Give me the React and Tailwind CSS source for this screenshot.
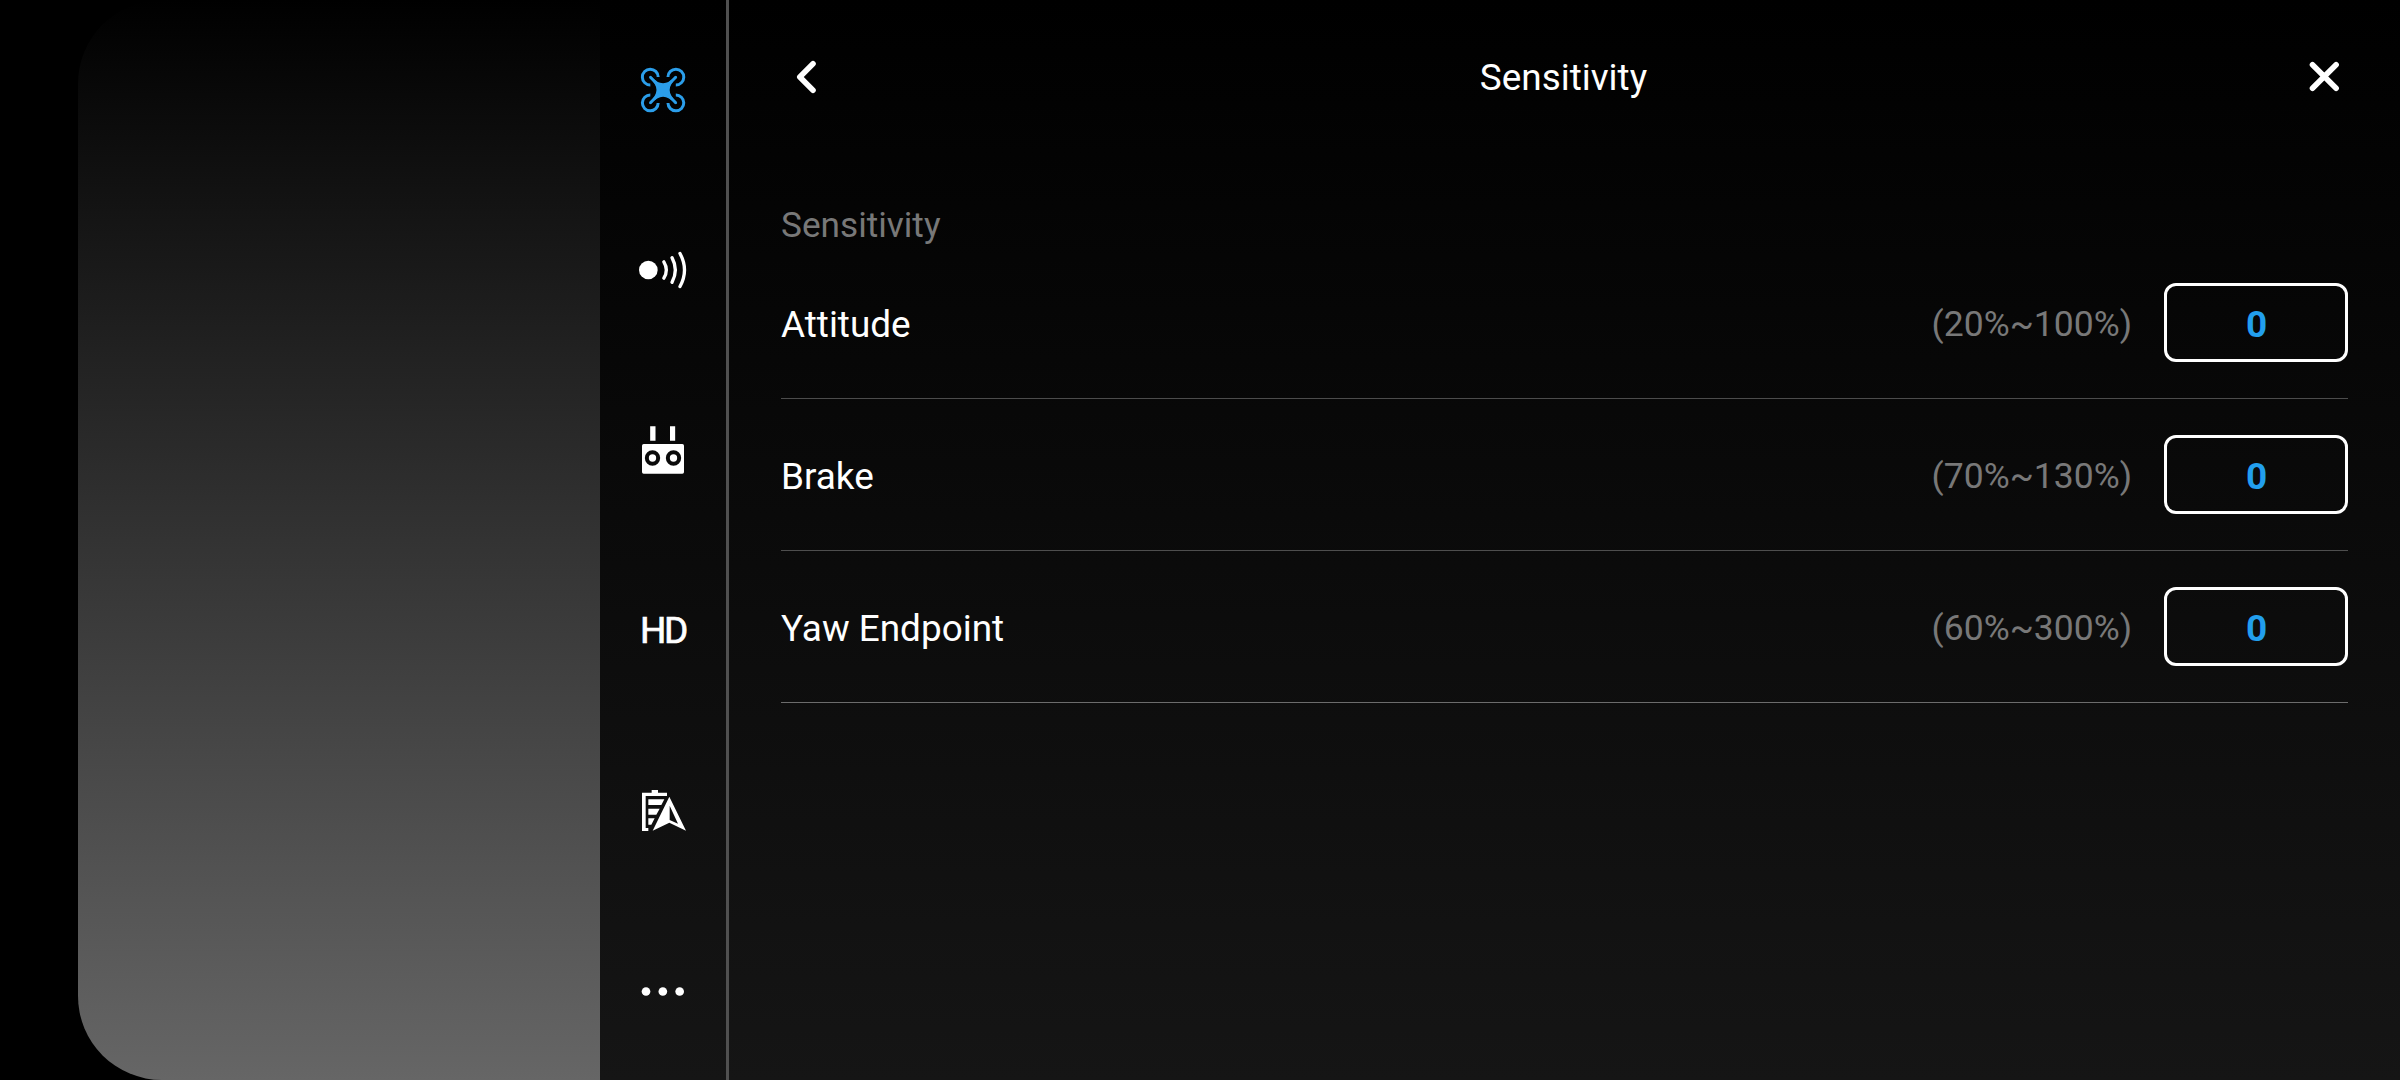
const rows = [
  { label: "Attitude", range: "(20%~100%)", line: "border-[#4c4c4c]" },
  { label: "Brake", range: "(70%~130%)", line: "border-[#4e4e4e]" },
  { label: "Yaw Endpoint", range: "(60%~300%)", line: "border-[#6c6c6c]" },
];

function Glyph({ children }) {
  return (
    <svg className="size-[54px]" viewBox="138 69 162 162" fill="none">
      {children}
    </svg>
  );
}

// One arm per corner, mirrored from the top-left one.
const corners = [
  "translate(0 0)",
  "translate(438.4 0) scale(-1 1)",
  "translate(0 300) scale(1 -1)",
  "translate(438.4 300) scale(-1 -1)",
];

function DroneIcon() {
  return (
    <Glyph>
      {corners.map((t) => (
        <g key={t} transform={t} stroke="#2b9eea">
          <path d="M204.500 111A23.700 23.700 0 1 0 181 135" strokeWidth="9" />
          <path d="M181 111.500L204 135" strokeWidth="8" strokeLinecap="round" />
        </g>
      ))}
      <path
        d="M184 109Q219.200 151 254.400 109L260 115Q218 150 260 185L254.400 191Q219.200 149 184 191L178.400 185Q220.400 150 178.400 115Z"
        fill="#2b9eea"
      />
    </Glyph>
  );
}

function SignalIcon() {
  return (
    <Glyph>
      <circle cx="175" cy="150" r="28" fill="#fff" />
      <g stroke="#fff" strokeWidth="10" strokeLinecap="round">
        <path d="M221.500 125.500Q236.500 150 221.500 174.500" />
        <path d="M246 113Q266 150 246 187" />
        <path d="M270 100.500Q297 150 270 199.500" />
      </g>
    </Glyph>
  );
}

function ControllerIcon() {
  return (
    <Glyph>
      <path d="M180.500 78.500h16v44h-16zM240 78.500h15.500v44H240z" fill="#fff" />
      <rect x="156" y="132" width="126" height="89" rx="5" fill="#fff" />
      <circle cx="187.500" cy="174" r="17" stroke="#0a0a0a" strokeWidth="12" />
      <circle cx="250.500" cy="174" r="17" stroke="#0a0a0a" strokeWidth="12" />
    </Glyph>
  );
}

function HdIcon() {
  return (
    <span className="pt-px text-[37px] tracking-[-2.3px] [-webkit-text-stroke:0.7px_white]">
      HD
    </span>
  );
}

function BatteryIcon() {
  return (
    <Glyph>
      <path d="M156 98h29v-8h19v8h27v10h-64v96h8v9h-19z" fill="#fff" />
      <path d="M175 118h48l-9 17h-39zM175 146h34l-10 18h-24zM175 175h19l-10 19h-9z" fill="#fff" />
      <path d="M238 110L288 212L238 188L188 212ZM239 137V180L264 191Z" fill="#fff" fillRule="evenodd" />
    </Glyph>
  );
}

function MoreIcon() {
  return (
    <Glyph>
      <circle cx="168" cy="154.500" r="13" fill="#fff" />
      <circle cx="218.500" cy="154.500" r="13" fill="#fff" />
      <circle cx="269" cy="154.500" r="13" fill="#fff" />
    </Glyph>
  );
}

const tabs = [DroneIcon, SignalIcon, ControllerIcon, HdIcon, BatteryIcon, MoreIcon];

export default function App() {
  return (
    <div className="flex h-[1080px] w-[2400px] overflow-hidden bg-black font-['Roboto',sans-serif] text-white">
      <div className="w-[600px] pl-[78px]">
        <div className="h-full rounded-l-[84px] bg-linear-to-b/srgb from-black to-[#666666]" />
      </div>
      <div className="flex flex-1 bg-linear-to-b/srgb from-black to-[#151515]">
        <nav className="flex w-[129px] flex-col border-r-[3px] border-[#505050]">
          {tabs.map((Icon, i) => (
            <button key={i} className="flex flex-1 items-center justify-center">
              <Icon />
            </button>
          ))}
        </nav>
        <main className="flex flex-1 flex-col px-[52px]">
          <header className="flex h-[154px] items-center justify-between">
            <button className="flex w-[60px] pl-[10px]">
              <svg className="h-[40px] w-[32px]" viewBox="0 0 32 40" fill="none" stroke="#fff" strokeWidth="5.600" strokeLinecap="round" strokeLinejoin="round">
                <path d="M22 6.800L8.800 20L22 33.200" />
              </svg>
            </button>
            <h1 className="pr-[2px] text-[36.9px] leading-[43px]">Sensitivity</h1>
            <button className="flex w-[60px] justify-end">
              <svg className="size-[48px]" viewBox="0 0 48 48" fill="none" stroke="#fff" strokeWidth="5.600" strokeLinecap="round">
                <path d="M12.500 11.700L36.100 35.300M36.100 11.700L12.500 35.300" />
              </svg>
            </button>
          </header>
          <h2 className="flex h-[93px] items-end pb-[1px] text-[35.2px] leading-[41px] text-[#787878]">Sensitivity</h2>
          {rows.map((r) => (
            <div key={r.label} className={"flex h-[152px] items-center border-b " + r.line}>
              <span className="flex-1 pt-[4px] text-[36.9px]">{r.label}</span>
              <span className="mr-[32px] pt-[4px] text-[35.5px] text-[#787878]">{r.range}</span>
              <span className="flex h-[79px] w-[184px] items-center justify-center rounded-[12px] border-[3px] border-white pt-[4px] pl-[1px] text-[37px] font-bold text-[#229fee]">0</span>
            </div>
          ))}
        </main>
      </div>
    </div>
  );
}
